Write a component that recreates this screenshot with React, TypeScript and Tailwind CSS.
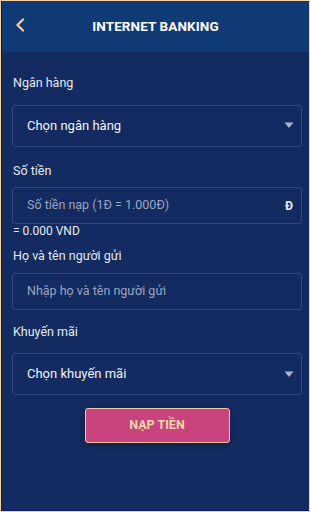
import React from 'react';

function Caret() {
  return (
    <svg width="10" height="7" viewBox="0 0 10 7" className="shrink-0">
      <path d="M0.5 0.5 H9.5 L5 6 Z" fill="#a9b4cc" />
    </svg>
  );
}

function Label({ children }: { children: React.ReactNode }) {
  return <div className="pl-[1px] text-[12.5px] leading-none text-[#e3e8f2]">{children}</div>;
}

function SelectBox({ text }: { text: string }) {
  return (
    <div className="flex h-[42px] items-center justify-between rounded-[3px] border border-[#33497c] pl-[14px] pr-[7px]">
      <span className="text-[13px] text-[#f1f3f8]">{text}</span>
      <Caret />
    </div>
  );
}

function InputBox({ placeholder, suffix }: { placeholder: string; suffix?: string }) {
  return (
    <div className="flex h-[37px] items-center justify-between rounded-[3px] border border-[#33497c] pl-[14px] pr-[8px]">
      <span className="text-[12.5px] text-[#9aa6c1]">{placeholder}</span>
      {suffix && <span className="text-[12px] font-bold text-[#e8ecf4]">{suffix}</span>}
    </div>
  );
}

export default function App() {
  return (
    <div className="h-[512px] w-[310px] overflow-hidden border border-[#f3d4a4] font-['Roboto',sans-serif]">
      <div className="flex h-full flex-col border-b border-l border-[#0a1760] bg-[#132b60]">
        <div className="relative flex h-[51px] shrink-0 items-center justify-center bg-[#0f3a76]">
          <svg width="10" height="14" viewBox="0 0 10 14" className="absolute left-[13px] top-[17px]">
            <path d="M8 1.5 L2.5 7 L8 12.5" fill="none" stroke="#f2c690" strokeWidth="2.4" strokeLinecap="round" strokeLinejoin="round" />
          </svg>
          <span className="text-[13.5px] font-bold tracking-[0.1px] text-white">INTERNET BANKING</span>
        </div>

        <div className="flex flex-col pl-[10px] pr-[7px] pt-[25px]">
          <Label>Ngân hàng</Label>
          <div className="mt-[15px]">
            <SelectBox text="Chọn ngân hàng" />
          </div>

          <div className="mt-[18px]">
            <Label>Số tiền</Label>
          </div>
          <div className="mt-[10px]">
            <InputBox placeholder="Số tiền nạp (1Đ = 1.000Đ)" suffix="Đ" />
          </div>
          <div className="mt-[1px] pl-[1px] text-[12px] leading-none text-[#e8ecf4]">= 0.000 VND</div>

          <div className="mt-[13px]">
            <Label>Họ và tên người gửi</Label>
          </div>
          <div className="mt-[10px]">
            <InputBox placeholder="Nhập họ và tên người gửi" />
          </div>

          <div className="mt-[16px]">
            <Label>Khuyến mãi</Label>
          </div>
          <div className="mt-[15px]">
            <SelectBox text="Chọn khuyến mãi" />
          </div>

          <div className="mt-[13px] flex justify-center">
            <button className="flex h-[35px] w-[145px] items-center justify-center rounded-[3px] border border-[#f0c9a0] bg-[#c9437f] text-[12.5px] font-bold text-[#f8d6a8] shadow-[0_2px_6px_rgba(0,0,0,0.35)]">
              NẠP TIỀN
            </button>
          </div>
        </div>
      </div>
    </div>
  );
}
